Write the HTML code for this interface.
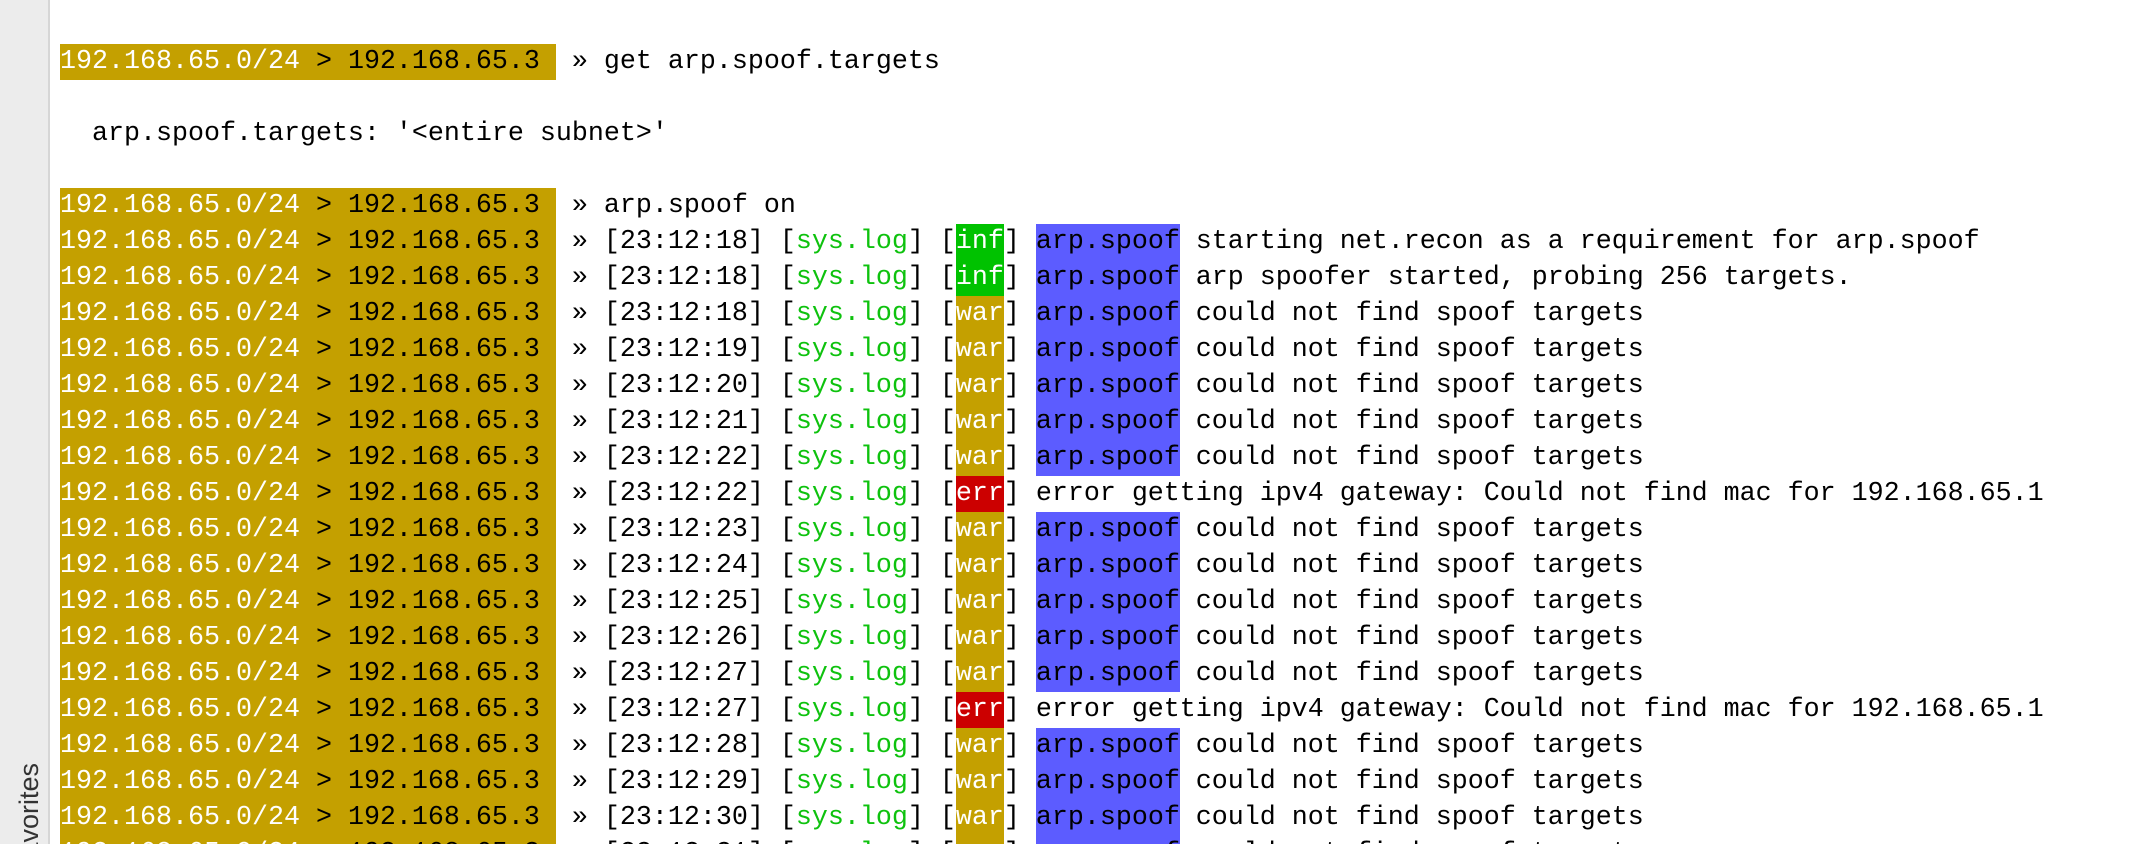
<!DOCTYPE html>
<html><head><meta charset="utf-8"><style>
html,body{margin:0;padding:0;background:#fff;width:2138px;height:844px;overflow:hidden;position:relative}
#side{position:absolute;left:0;top:0;width:50px;height:844px;background:#ececec;border-right:2px solid #d6d6d6;box-sizing:border-box;overflow:hidden}
#fav{position:absolute;left:14px;top:874px;transform-origin:0 0;transform:rotate(-90deg);font:27px/30px "Liberation Sans",sans-serif;color:#333;white-space:nowrap}
#term{position:absolute;left:60px;top:44px;font-family:"Liberation Mono",monospace;font-size:26.67px;color:#000}
.l{height:36px;line-height:36px;white-space:pre}
.l span{display:inline-block;height:36px;vertical-align:top}
.y{background:#c4a000}
.w{color:#fff}
.g{color:#0ec20e}
.gi{background:#00c200;color:#fff}
.wa{background:#c4a000;color:#fff}
.er{background:#cc0000;color:#fff}
.b{background:#5c5cff}
</style></head><body>
<div id="side"><div id="fav">Favorites</div></div>
<div id="term">
<div class="l"><span class="y"><span class="w">192.168.65.0/24</span> &gt; 192.168.65.3 </span> » get arp.spoof.targets</div>
<div class="l"> </div>
<div class="l">  arp.spoof.targets: '&lt;entire subnet&gt;'</div>
<div class="l"> </div>
<div class="l"><span class="y"><span class="w">192.168.65.0/24</span> &gt; 192.168.65.3 </span> » arp.spoof on</div>
<div class="l"><span class="y"><span class="w">192.168.65.0/24</span> &gt; 192.168.65.3 </span> » [23:12:18] [<span class="g">sys.log</span>] [<span class="gi">inf</span>] <span class="b">arp.spoof</span> starting net.recon as a requirement for arp.spoof</div>
<div class="l"><span class="y"><span class="w">192.168.65.0/24</span> &gt; 192.168.65.3 </span> » [23:12:18] [<span class="g">sys.log</span>] [<span class="gi">inf</span>] <span class="b">arp.spoof</span> arp spoofer started, probing 256 targets.</div>
<div class="l"><span class="y"><span class="w">192.168.65.0/24</span> &gt; 192.168.65.3 </span> » [23:12:18] [<span class="g">sys.log</span>] [<span class="wa">war</span>] <span class="b">arp.spoof</span> could not find spoof targets</div>
<div class="l"><span class="y"><span class="w">192.168.65.0/24</span> &gt; 192.168.65.3 </span> » [23:12:19] [<span class="g">sys.log</span>] [<span class="wa">war</span>] <span class="b">arp.spoof</span> could not find spoof targets</div>
<div class="l"><span class="y"><span class="w">192.168.65.0/24</span> &gt; 192.168.65.3 </span> » [23:12:20] [<span class="g">sys.log</span>] [<span class="wa">war</span>] <span class="b">arp.spoof</span> could not find spoof targets</div>
<div class="l"><span class="y"><span class="w">192.168.65.0/24</span> &gt; 192.168.65.3 </span> » [23:12:21] [<span class="g">sys.log</span>] [<span class="wa">war</span>] <span class="b">arp.spoof</span> could not find spoof targets</div>
<div class="l"><span class="y"><span class="w">192.168.65.0/24</span> &gt; 192.168.65.3 </span> » [23:12:22] [<span class="g">sys.log</span>] [<span class="wa">war</span>] <span class="b">arp.spoof</span> could not find spoof targets</div>
<div class="l"><span class="y"><span class="w">192.168.65.0/24</span> &gt; 192.168.65.3 </span> » [23:12:22] [<span class="g">sys.log</span>] [<span class="er">err</span>] error getting ipv4 gateway: Could not find mac for 192.168.65.1</div>
<div class="l"><span class="y"><span class="w">192.168.65.0/24</span> &gt; 192.168.65.3 </span> » [23:12:23] [<span class="g">sys.log</span>] [<span class="wa">war</span>] <span class="b">arp.spoof</span> could not find spoof targets</div>
<div class="l"><span class="y"><span class="w">192.168.65.0/24</span> &gt; 192.168.65.3 </span> » [23:12:24] [<span class="g">sys.log</span>] [<span class="wa">war</span>] <span class="b">arp.spoof</span> could not find spoof targets</div>
<div class="l"><span class="y"><span class="w">192.168.65.0/24</span> &gt; 192.168.65.3 </span> » [23:12:25] [<span class="g">sys.log</span>] [<span class="wa">war</span>] <span class="b">arp.spoof</span> could not find spoof targets</div>
<div class="l"><span class="y"><span class="w">192.168.65.0/24</span> &gt; 192.168.65.3 </span> » [23:12:26] [<span class="g">sys.log</span>] [<span class="wa">war</span>] <span class="b">arp.spoof</span> could not find spoof targets</div>
<div class="l"><span class="y"><span class="w">192.168.65.0/24</span> &gt; 192.168.65.3 </span> » [23:12:27] [<span class="g">sys.log</span>] [<span class="wa">war</span>] <span class="b">arp.spoof</span> could not find spoof targets</div>
<div class="l"><span class="y"><span class="w">192.168.65.0/24</span> &gt; 192.168.65.3 </span> » [23:12:27] [<span class="g">sys.log</span>] [<span class="er">err</span>] error getting ipv4 gateway: Could not find mac for 192.168.65.1</div>
<div class="l"><span class="y"><span class="w">192.168.65.0/24</span> &gt; 192.168.65.3 </span> » [23:12:28] [<span class="g">sys.log</span>] [<span class="wa">war</span>] <span class="b">arp.spoof</span> could not find spoof targets</div>
<div class="l"><span class="y"><span class="w">192.168.65.0/24</span> &gt; 192.168.65.3 </span> » [23:12:29] [<span class="g">sys.log</span>] [<span class="wa">war</span>] <span class="b">arp.spoof</span> could not find spoof targets</div>
<div class="l"><span class="y"><span class="w">192.168.65.0/24</span> &gt; 192.168.65.3 </span> » [23:12:30] [<span class="g">sys.log</span>] [<span class="wa">war</span>] <span class="b">arp.spoof</span> could not find spoof targets</div>
<div class="l"><span class="y"><span class="w">192.168.65.0/24</span> &gt; 192.168.65.3 </span> » [23:12:31] [<span class="g">sys.log</span>] [<span class="wa">war</span>] <span class="b">arp.spoof</span> could not find spoof targets</div>
</div>
</body></html>
